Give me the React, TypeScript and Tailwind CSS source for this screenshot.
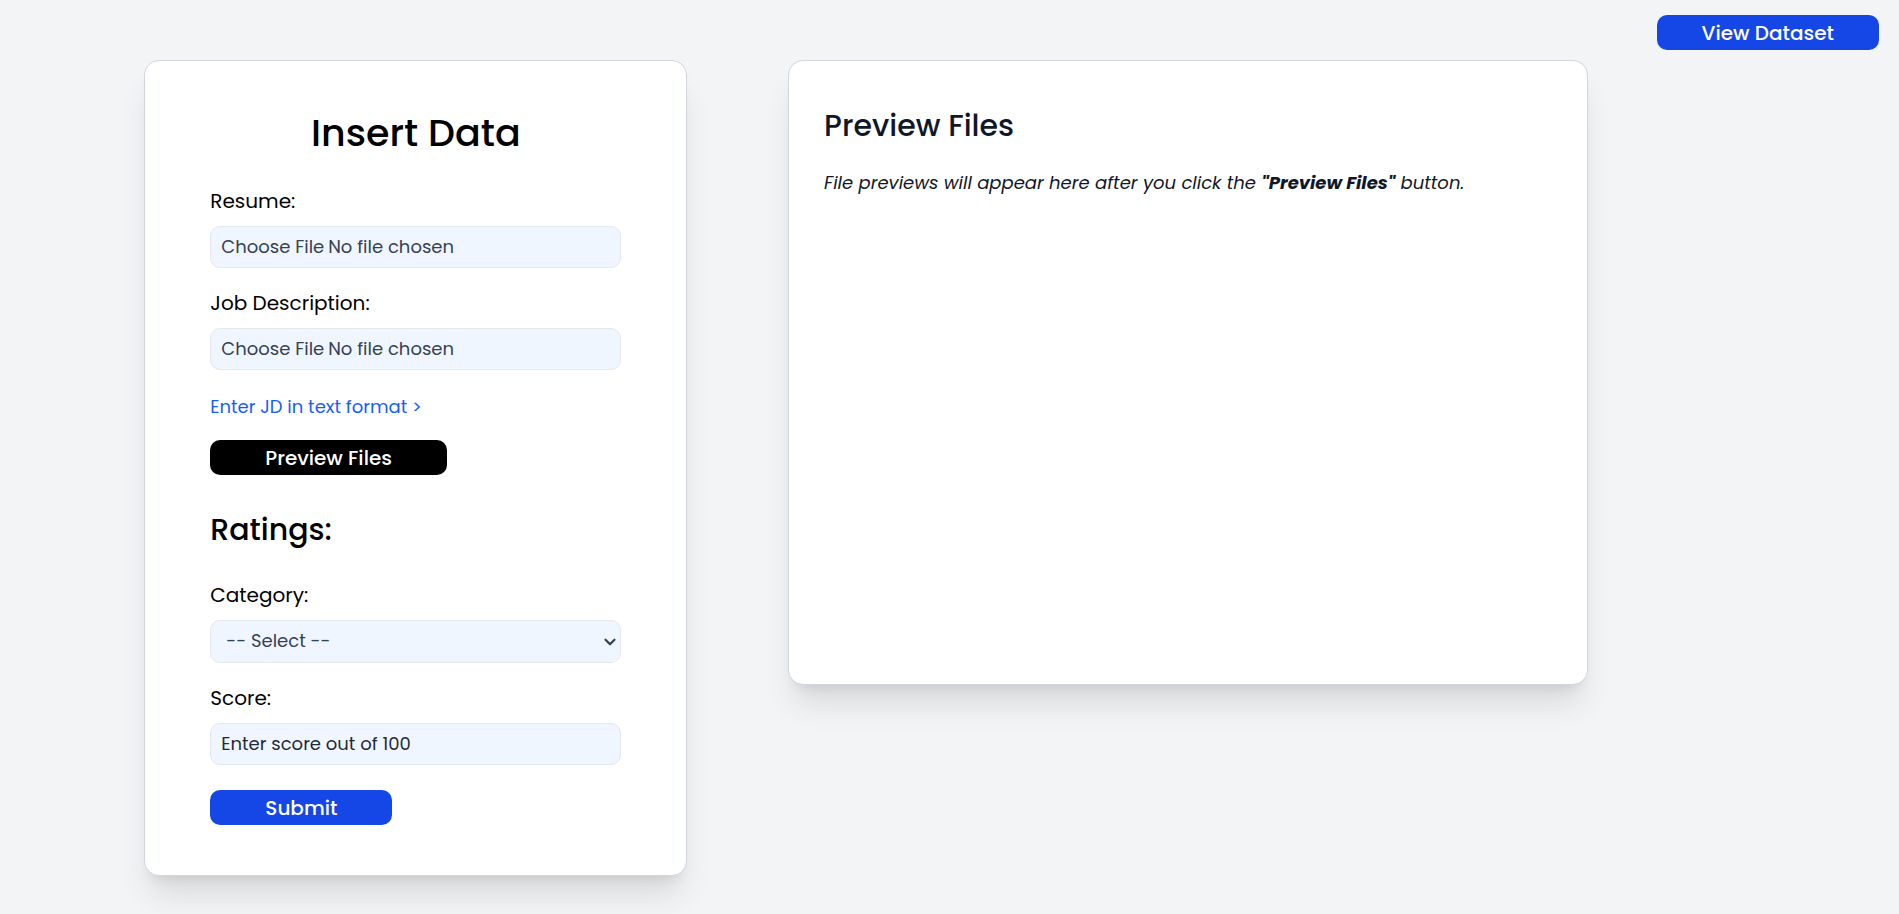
import type { ReactNode } from 'react';
import { ChevronDown } from 'lucide-react';

const control =
  'block w-full rounded-[10px] border border-gray-200 bg-blue-50 text-[18px] text-gray-700';

const button =
  'h-[35px] rounded-[10px] text-[20px] leading-[30px] font-medium text-white whitespace-nowrap';

const card =
  'shrink-0 rounded-[15px] border border-gray-300 bg-white shadow-[0_25px_31px_-6px_rgb(0_0_0/0.1),0_10px_13px_-8px_rgb(0_0_0/0.1)]';

function Field({ id, label, children }: { id: string; label: string; children: ReactNode }) {
  return (
    <div className="mb-[20px]">
      <label htmlFor={id} className="mb-[10px] block text-[20px] leading-[30px]">
        {label}
      </label>
      {children}
    </div>
  );
}

export default function App() {
  return (
    <div className="min-h-screen bg-gray-100 pb-[38px] font-[Poppins,Inter,sans-serif] text-black">
      <header className="flex justify-end pt-[15px] pr-[20px] pb-[10px]">
        <button type="button" className={`${button} bg-blue-700 px-[45px]`}>
          View Dataset
        </button>
      </header>

      <main className="flex items-start gap-[5.3%]">
        <form
          className={`${card} ml-[7.6%] w-[28.6%] px-[65px] pt-[45px] pb-[50px]`}
          onSubmit={(event) => event.preventDefault()}
        >
          <h1 className="mb-[26px] text-center text-[38px] leading-[54px] font-medium">Insert Data</h1>

          <Field id="resume" label="Resume:">
            <input id="resume" type="file" className={`${control} h-[42px] px-[10px] py-[6px] leading-[27px]`} />
          </Field>
          <Field id="jd" label="Job Description:">
            <input id="jd" type="file" className={`${control} h-[42px] px-[10px] py-[6px] leading-[27px]`} />
          </Field>

          <a href="#jd-text" className="mt-[23px] block text-[18px] leading-[27px] text-blue-600">
            Enter JD in text format &gt;
          </a>
          <button type="button" className={`${button} mt-[20px] bg-black px-[55px]`}>
            Preview Files
          </button>

          <h2 className="mt-[32px] mb-[28px] text-[30px] leading-[45px] font-medium">Ratings:</h2>

          <Field id="category" label="Category:">
            <div className="relative">
              <select id="category" className={`${control} h-[43px] appearance-none px-[15px] pb-[2px]`} defaultValue="">
                <option value="">-- Select --</option>
              </select>
              <ChevronDown
                aria-hidden="true"
                size={18}
                strokeWidth={3}
                className="pointer-events-none absolute inset-y-0 right-[2px] my-auto text-gray-700"
              />
            </div>
          </Field>
          <Field id="score" label="Score:">
            <input
              id="score"
              type="text"
              placeholder="Enter score out of 100"
              className={`${control} h-[42px] px-[10px] pb-[2px] placeholder:text-gray-800`}
            />
          </Field>

          <button type="submit" className={`${button} mt-[5px] bg-blue-700 px-[55px]`}>
            Submit
          </button>
        </form>

        <section className={`${card} min-h-[625px] w-[42.1%] px-[35px] pt-[42px] text-gray-900`}>
          <h2 className="text-[30px] leading-[45px] font-medium">Preview Files</h2>
          <p className="mt-[21px] text-[18px] leading-[27px] italic">
            File previews will appear here after you click the <strong>"Preview Files"</strong> button.
          </p>
        </section>
      </main>
    </div>
  );
}
